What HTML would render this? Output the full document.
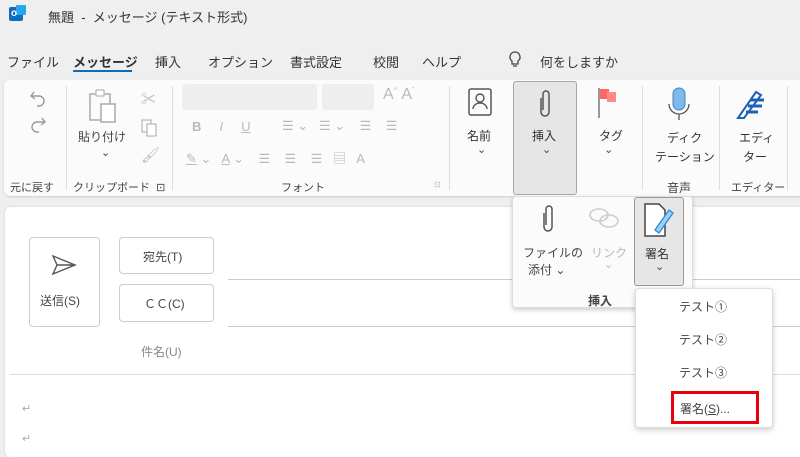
<!DOCTYPE html>
<html><head><meta charset="utf-8"><style>
*{margin:0;padding:0;box-sizing:border-box}
body{width:800px;height:450px;overflow:hidden;background:#efefef;font-family:"Liberation Sans","Noto Sans CJK JP",sans-serif;color:#333;position:relative}
.a{position:absolute;white-space:nowrap}
.t{font-size:13px}
.r{font-size:12px}
.s{font-size:11px;color:#444}
.g{color:#b9b9b9}
.sep{position:absolute;width:1px;background:#ddd}
svg{position:absolute}
</style></head><body>
<div class="a" style="left:9px;top:7px;width:14px;height:14px;background:#0f6cbd;border-radius:2px"></div>
<div class="a" style="left:16px;top:5px;width:10px;height:10px;background:#28a8ea;border-radius:1px"></div>
<div class="a" style="left:11px;top:8px;color:#fff;font-size:10px;font-weight:bold">o</div>
<div class="a t" style="left:48px;top:7px;color:#333">無題&nbsp; - &nbsp;メッセージ (テキスト形式)</div>
<div class="a t" style="left:7px;top:52px">ファイル</div>
<div class="a t" style="left:73px;top:52px;font-weight:bold">メッセージ</div>
<div class="a" style="left:73px;top:70px;width:59px;height:2px;background:#0f6cbd"></div>
<div class="a t" style="left:155px;top:52px">挿入</div>
<div class="a t" style="left:208px;top:52px">オプション</div>
<div class="a t" style="left:290px;top:52px">書式設定</div>
<div class="a t" style="left:373px;top:52px">校閲</div>
<div class="a t" style="left:422px;top:52px">ヘルプ</div>
<svg style="left:508px;top:51px" width="14" height="18"><path d="M7 1a5 5 0 0 0-3 9v3h6v-3a5 5 0 0 0-3-9zM5 15h4" fill="none" stroke="#444" stroke-width="1.3"/></svg>
<div class="a t" style="left:540px;top:52px">何をしますか</div>
<div class="a" style="left:4px;top:80px;width:800px;height:116px;background:#fbfbfb;border-radius:6px;box-shadow:0 1px 2px #ccc"></div>
<svg style="left:28px;top:88px" width="20" height="50"><path d="M6 4 3 8l4 3M3 8h8a5 5 0 0 1 0 10h-2" fill="none" stroke="#999" stroke-width="1.4"/><path d="M14 30l3 4-4 3M17 34H9a5 5 0 0 0 0 10h2" fill="none" stroke="#999" stroke-width="1.4"/></svg>
<div class="a s" style="left:10px;top:179px">元に戻す</div>
<div class="sep" style="left:66px;top:86px;height:104px"></div>
<svg style="left:88px;top:88px" width="40" height="38"><rect x="2" y="6" width="20" height="26" fill="none" stroke="#aaa" stroke-width="1.5"/><rect x="8" y="2" width="8" height="6" fill="#fff" stroke="#aaa"/><rect x="13" y="16" width="14" height="18" fill="#fff" stroke="#aaa" stroke-width="1.5"/></svg>
<div class="a s" style="left:78px;top:128px;font-size:12px">貼り付け</div>
<div class="a s" style="left:101px;top:146px">⌄</div>
<div class="a g" style="left:141px;top:88px;font-size:15px">✂</div>
<svg style="left:140px;top:118px" width="20" height="20"><rect x="2" y="2" width="9" height="12" fill="none" stroke="#aaa"/><rect x="7" y="6" width="9" height="12" fill="#fff" stroke="#aaa"/></svg>
<div class="a g" style="left:141px;top:146px;font-size:15px">🖌</div>
<div class="a s" style="left:73px;top:179px">クリップボード&nbsp; ⊡</div>
<div class="sep" style="left:172px;top:86px;height:104px"></div>
<div class="a" style="left:182px;top:84px;width:135px;height:26px;background:#eee;border-radius:3px"></div>
<div class="a" style="left:322px;top:84px;width:52px;height:26px;background:#eee;border-radius:3px"></div>
<div class="a g" style="left:383px;top:86px;font-size:16px">A<sup style="font-size:7px">^</sup>&nbsp;A<sup style="font-size:7px">ˇ</sup></div>
<div class="a g" style="left:192px;top:119px;font-size:13px;font-weight:bold">B&nbsp;&nbsp;&nbsp;&nbsp;&nbsp;<i style="font-weight:normal">I</i>&nbsp;&nbsp;&nbsp;&nbsp;&nbsp;<u style="font-weight:normal">U</u></div>
<div class="a g" style="left:282px;top:118px;font-size:13px">☰ ⌄&nbsp;&nbsp; ☰ ⌄&nbsp;&nbsp;&nbsp; ☰&nbsp;&nbsp;&nbsp; ☰</div>
<div class="a g" style="left:186px;top:148px;font-size:13px"><u>✎</u> ⌄&nbsp;&nbsp; <u>A</u> ⌄&nbsp;&nbsp;&nbsp; ☰&nbsp;&nbsp;&nbsp; ☰&nbsp;&nbsp;&nbsp; ☰&nbsp;&nbsp; ▤&nbsp;&nbsp; A</div>
<div class="a s" style="left:281px;top:179px">フォント</div>
<div class="a g" style="left:434px;top:180px;font-size:8px">⊡</div>
<div class="sep" style="left:449px;top:86px;height:104px"></div>
<svg style="left:466px;top:87px" width="28" height="32"><rect x="3" y="2" width="22" height="26" rx="2" fill="none" stroke="#555" stroke-width="1.5"/><circle cx="14" cy="11" r="4" fill="none" stroke="#555" stroke-width="1.4"/><path d="M7 22a7 6 0 0 1 14 0" fill="none" stroke="#555" stroke-width="1.4"/></svg>
<div class="a r" style="left:467px;top:127px">名前</div>
<div class="a s" style="left:477px;top:143px">⌄</div>
<div class="a" style="left:513px;top:81px;width:64px;height:114px;background:#e6e6e6;border:1px solid #a8a8a8;border-radius:3px"></div>
<svg style="left:535px;top:86px" width="20" height="36"><path d="M6 12v14a4 4 0 0 0 8 0V8a3 3 0 0 0-6 0v16" fill="none" stroke="#555" stroke-width="1.5"/></svg>
<div class="a r" style="left:532px;top:127px">挿入</div>
<div class="a s" style="left:542px;top:143px">⌄</div>
<svg style="left:596px;top:86px" width="26" height="34"><path d="M3 2v30" stroke="#777" stroke-width="1.5"/><rect x="4" y="3" width="9" height="10" fill="#f66"/><rect x="11" y="6" width="9" height="10" fill="#f88"/></svg>
<div class="a r" style="left:599px;top:127px">タグ</div>
<div class="a s" style="left:604px;top:143px">⌄</div>
<div class="sep" style="left:642px;top:86px;height:104px"></div>
<svg style="left:664px;top:86px" width="30" height="38"><rect x="9" y="2" width="12" height="22" rx="6" fill="#7fb8ea" stroke="#3a86c8"/><path d="M5 18a10 10 0 0 0 20 0M15 28v6" fill="none" stroke="#555" stroke-width="1.3"/></svg>
<div class="a r" style="left:667px;top:129px">ディク</div>
<div class="a r" style="left:655px;top:148px">テーション</div>
<div class="a s" style="left:667px;top:179px;font-size:12px">音声</div>
<div class="sep" style="left:719px;top:86px;height:104px"></div>
<svg style="left:734px;top:88px" width="34" height="34"><path d="M4 30 22 4l5 3L10 30z" fill="#fff" stroke="#1f5fb8" stroke-width="2"/><path d="M16 12h14M14 18h14M12 24h12" stroke="#1f5fb8" stroke-width="3"/></svg>
<div class="a r" style="left:739px;top:129px">エディ</div>
<div class="a r" style="left:743px;top:148px">ター</div>
<div class="a s" style="left:731px;top:179px;font-size:11px">エディター</div>
<div class="sep" style="left:787px;top:86px;height:104px"></div>
<div class="a" style="left:5px;top:207px;width:800px;height:250px;background:#fff;border-radius:6px;box-shadow:0 0 2px #ccc"></div>
<div class="a" style="left:29px;top:237px;width:71px;height:90px;border:1px solid #ccc;border-radius:4px"></div>
<svg style="left:50px;top:254px" width="28" height="22"><path d="M3 2l22 9-22 9 4-9z M7 11h18" fill="none" stroke="#555" stroke-width="1.4"/></svg>
<div class="a r" style="left:40px;top:292px;color:#444">送信(S)</div>
<div class="a" style="left:119px;top:237px;width:95px;height:37px;border:1px solid #ccc;border-radius:4px"></div>
<div class="a r" style="left:143px;top:248px;color:#444">宛先(T)</div>
<div class="a" style="left:119px;top:284px;width:95px;height:38px;border:1px solid #ccc;border-radius:4px"></div>
<div class="a r" style="left:144px;top:295px;color:#444">ＣＣ(C)</div>
<div class="a" style="left:228px;top:279px;width:600px;height:1px;background:#ccc"></div>
<div class="a" style="left:228px;top:326px;width:600px;height:1px;background:#ccc"></div>
<div class="a r" style="left:141px;top:343px;color:#888">件名(U)</div>
<div class="a" style="left:10px;top:374px;width:800px;height:1px;background:#ddd"></div>
<div class="a" style="left:22px;top:402px;font-size:11px;color:#aaa">↵</div>
<div class="a" style="left:22px;top:432px;font-size:11px;color:#aaa">↵</div>
<div class="a" style="left:512px;top:196px;width:181px;height:112px;background:#fbfbfb;border:1px solid #ddd;border-radius:4px;box-shadow:0 2px 5px rgba(0,0,0,.2)"></div>
<svg style="left:538px;top:201px" width="20" height="36"><path d="M6 12v14a4 4 0 0 0 8 0V8a3 3 0 0 0-6 0v16" fill="none" stroke="#555" stroke-width="1.5"/></svg>
<div class="a s" style="left:523px;top:244px;font-size:12px">ファイルの</div>
<div class="a s" style="left:528px;top:261px;font-size:12px">添付 ⌄</div>
<svg style="left:588px;top:207px" width="32" height="22"><ellipse cx="11" cy="8" rx="9" ry="6" fill="none" stroke="#ccc" stroke-width="1.6"/><ellipse cx="21" cy="14" rx="9" ry="6" fill="none" stroke="#ccc" stroke-width="1.6"/></svg>
<div class="a g" style="left:591px;top:244px;font-size:12px">リンク</div>
<div class="a g" style="left:604px;top:258px;font-size:11px">⌄</div>
<div class="a" style="left:634px;top:197px;width:50px;height:89px;background:#e6e6e6;border:1px solid #999;border-radius:3px"></div>
<svg style="left:643px;top:202px" width="34" height="38"><path d="M2 2h14l6 6v26H2z" fill="#fff" stroke="#444" stroke-width="1.5"/><path d="M12 28 26 8l4 3-14 20z" fill="#9cd0f5" stroke="#2a8ad6" stroke-width="1.3"/></svg>
<div class="a r" style="left:645px;top:245px">署名</div>
<div class="a s" style="left:655px;top:260px">⌄</div>
<div class="a s" style="left:588px;top:292px;font-size:12px;font-weight:bold">挿入</div>
<div class="a" style="left:635px;top:288px;width:138px;height:140px;background:#fff;border:1px solid #ddd;border-radius:4px;box-shadow:0 2px 6px rgba(0,0,0,.2)"></div>
<div class="a s" style="left:679px;top:298px;font-size:12px">テスト①</div>
<div class="a s" style="left:679px;top:331px;font-size:12px">テスト②</div>
<div class="a s" style="left:679px;top:364px;font-size:12px">テスト③</div>
<div class="a" style="left:671px;top:391px;width:88px;height:33px;border:3px solid #e8000b"></div>
<div class="a s" style="left:680px;top:400px;font-size:12px">署名(<u>S</u>)...</div>
</body></html>
